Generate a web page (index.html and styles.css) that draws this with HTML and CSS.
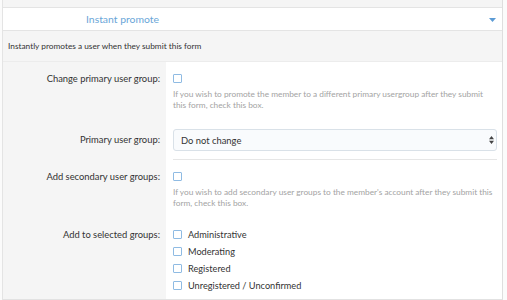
FILE: index.html
```html
<!DOCTYPE html>
<html lang="en">
<head>
    <meta charset="UTF-8">
    <meta name="viewport" content="width=device-width, initial-scale=1.0">
    <title>Instant promote</title>
    <link rel="stylesheet" href="styles.css">
</head>
<body>
    <div class="panel">
        <div class="panel-header">
            <span class="panel-title">Instant promote</span>
            <svg class="toggle" width="7" height="4" viewBox="0 0 7 4"><path d="M0 0H7L3.5 4Z" fill="#5b9bd5"/></svg>
        </div>
        <div class="panel-desc">Instantly promotes a user when they submit this form</div>

        <div class="form-row">
            <div class="row-label">Change primary user group:</div>
            <div class="row-value">
                <div class="check-line"><input type="checkbox" class="check"></div>
                <p class="hint">If you wish to promote the member to a different primary usergroup after they submit this form, check this box.</p>
            </div>
        </div>

        <div class="form-row select-row">
            <div class="row-label">Primary user group:</div>
            <div class="row-value">
                <div class="select-wrap">
                    <select class="select">
                        <option>Do not change</option>
                    </select>
                    <svg class="select-arrows" width="5" height="8" viewBox="0 0 5 8"><path d="M0 3.2L2.5 0 5 3.2ZM0 4.8H5L2.5 8Z" fill="#444"/></svg>
                </div>
            </div>
        </div>

        <div class="form-row">
            <div class="row-label">Add secondary user groups:</div>
            <div class="row-value">
                <div class="check-line"><input type="checkbox" class="check"></div>
                <p class="hint">If you wish to add secondary user groups to the member's account after they submit this form, check this box.</p>
            </div>
        </div>

        <div class="form-row last-row">
            <div class="row-label">Add to selected groups:</div>
            <div class="row-value">
                <ul class="group-list">
                    <li><label><input type="checkbox" class="check"> Administrative</label></li>
                    <li><label><input type="checkbox" class="check"> Moderating</label></li>
                    <li><label><input type="checkbox" class="check"> Registered</label></li>
                    <li><label><input type="checkbox" class="check"> Unregistered / Unconfirmed</label></li>
                </ul>
            </div>
        </div>
    </div>
</body>
</html>
```

FILE: styles.css
```css
body {
    margin: 0;
    background-color: #fbfbfb;
    font-family: Lato, "Open Sans", sans-serif;
    font-size: 9.4px;
    color: #333;
}

.panel {
    margin-left: 2px;
    width: 499px;
    padding-top: 7px;
    background-color: #f5f5f5;
    border-left: 1px solid #e4e4e4;
    border-right: 1px solid #dedede;
    border-bottom: 1px solid #e2e2e2;
}

.panel-header {
    display: flex;
    align-items: center;
    justify-content: space-between;
    height: 22px;
    padding: 0 6px 0 83px;
    background-color: #fff;
    border-top: 1px solid #e4e4e4;
    border-bottom: 1px solid #e4e4e4;
}

.panel-title {
    font-size: 10.4px;
    color: #6aa6d8;
}

.toggle {
    margin-top: 1px;
}

.panel-desc {
    height: 30px;
    line-height: 30px;
    padding: 0 5px;
    font-size: 8.3px;
    border-bottom: 1px solid #ececec;
}

.form-row {
    display: grid;
    grid-template-columns: 163px 1fr;
}

.row-label {
    padding: 8px 6px 0 0;
    line-height: 17px;
    text-align: right;
    font-size: 9.4px;
}

.row-value {
    padding: 8px 5px 9px 7px;
    background-color: #fff;
}

.check-line {
    display: flex;
    align-items: center;
    height: 17px;
}

.check {
    appearance: none;
    -webkit-appearance: none;
    width: 9px;
    height: 9px;
    margin: 0;
    border: 1px solid #8fbbe3;
    border-radius: 1px;
    background-color: #fff;
    box-sizing: border-box;
}

.hint {
    margin: 2px 0 0;
    font-size: 8.3px;
    line-height: 11px;
    color: #a3a3a3;
}

.select-row .row-label {
    padding-top: 9px;
    line-height: 22px;
}

.select-row .row-value {
    padding-top: 9px;
    padding-bottom: 0;
}

.select-wrap {
    position: relative;
    padding-bottom: 8px;
    border-bottom: 1px solid #e6e6e6;
}

.select {
    appearance: none;
    -webkit-appearance: none;
    display: block;
    width: 100%;
    height: 22px;
    padding: 0 7px;
    font-family: inherit;
    font-size: 9.4px;
    color: #333;
    background-color: #f9fbfd;
    border: 1px solid #d9e1e8;
    border-radius: 3px;
}

.select-arrows {
    position: absolute;
    right: 3px;
    top: 7px;
}

.last-row .row-value {
    padding-bottom: 5px;
}

.group-list {
    list-style: none;
    margin: 0;
    padding: 0;
}

.group-list li {
    height: 17px;
    line-height: 17px;
    font-size: 9.2px;
}

.group-list label {
    display: flex;
    align-items: center;
    gap: 6px;
}
```
